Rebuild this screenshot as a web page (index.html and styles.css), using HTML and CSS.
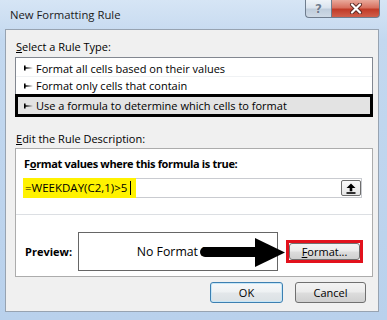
FILE: index.html
```html
<!DOCTYPE html>
<html lang="en">
<head>
    <meta charset="UTF-8">
    <title>New Formatting Rule</title>
    <link rel="stylesheet" href="styles.css">
</head>
<body>
    <div class="window">
        <div class="titlebar">
            <span class="title">New Formatting Rule</span>
            <div class="caption">
                <span class="cap-btn help">?</span>
                <span class="cap-btn close">
                    <svg width="16" height="11" viewBox="0 0 16 11">
                        <path d="M4 1.5 L12 9.5 M12 1.5 L4 9.5" stroke="#5b2a25" stroke-width="4" stroke-linecap="round"/>
                        <path d="M4 1.5 L12 9.5 M12 1.5 L4 9.5" stroke="#fff" stroke-width="2.2" stroke-linecap="round"/>
                    </svg>
                </span>
            </div>
        </div>

        <div class="panel">
            <div class="label"><u>S</u>elect a Rule Type:</div>
            <ul class="rule-list">
                <li class="rule first"><svg class="bullet" width="9" height="6" viewBox="0 0 9 6"><path d="M0 0.5 H1.6 V2.2 L9 3 L1.6 3.8 V5.5 H0 Z" fill="#000"/></svg>Format all cells based on their values</li>
                <li class="rule"><svg class="bullet" width="9" height="6" viewBox="0 0 9 6"><path d="M0 0.5 H1.6 V2.2 L9 3 L1.6 3.8 V5.5 H0 Z" fill="#000"/></svg>Format only cells that contain</li>
                <li class="rule selected"><svg class="bullet" width="9" height="6" viewBox="0 0 9 6"><path d="M0 0.5 H1.6 V2.2 L9 3 L1.6 3.8 V5.5 H0 Z" fill="#000"/></svg>Use a formula to determine which cells to format</li>
            </ul>

            <div class="label label-desc"><u>E</u>dit the Rule Description:</div>
            <div class="desc">
                <div class="desc-title">F<u>o</u>rmat values where this formula is true:</div>
                <div class="formula">
                    <span class="formula-text">=WEEKDAY(C2,1)&gt;5<span class="caret"></span></span>
                    <span class="collapse-btn">
                        <svg width="12" height="11" viewBox="0 0 12 11">
                            <path d="M6 0.5 L10.5 5 H7.3 V8.2 H4.7 V5 H1.5 Z" fill="#000"/>
                            <rect x="1.5" y="9.2" width="9" height="1.6" fill="#000"/>
                        </svg>
                    </span>
                </div>
                <div class="preview-row">
                    <span class="preview-label">Preview:</span>
                    <div class="preview-box">No Format Set</div>
                    <div class="format-wrap">
                        <button class="btn"><u>F</u>ormat...</button>
                    </div>
                    <svg class="arrow" width="88" height="34" viewBox="0 0 88 34">
                        <path d="M7 11 H59 V21 H7 A5 5 0 0 1 7 11 Z" fill="#000"/>
                        <path d="M57 2 L87 16.5 L57 31 Z" fill="#000"/>
                    </svg>
                </div>
            </div>

            <div class="actions">
                <button class="btn btn-ok">OK</button>
                <button class="btn btn-cancel">Cancel</button>
            </div>
        </div>
    </div>
</body>
</html>
```

FILE: styles.css
```css
* {
    margin: 0;
    padding: 0;
    box-sizing: border-box;
}

body {
    background-color: #bfd5ee;
    font-family: 'Open Sans', sans-serif;
    font-size: 11px;
    color: #000;
}

u {
    text-decoration: underline;
    text-underline-offset: 1px;
}

.window {
    width: 387px;
    height: 320px;
    padding: 0 8px 8px 5px;
    background: linear-gradient(180deg, #d6e5f5 0, #c3d8ef 40px, #b9d1ec 100%);
    display: flex;
    flex-direction: column;
    overflow: hidden;
}

/* Заголовок окна */
.titlebar {
    height: 29px;
    flex: none;
    display: flex;
    align-items: flex-start;
}

.title {
    font-size: 11.3px;
    line-height: 29px;
    padding-left: 5px;
    color: #1b1b1b;
}

.caption {
    margin-left: auto;
    margin-right: -1px;
    display: flex;
}

.cap-btn {
    height: 18px;
    display: flex;
    align-items: center;
    justify-content: center;
    border: 1px solid #6f7d8e;
    border-top: none;
}

.help {
    width: 26px;
    border-right: none;
    border-radius: 0 0 0 4px;
    background: linear-gradient(180deg, #eef3f8 0, #dbe4ee 45%, #bfcddc 55%, #cfdae6 100%);
    font-family: 'DejaVu Sans', sans-serif;
    font-size: 12px;
    font-weight: bold;
    color: #6e7c8e;
    text-shadow: 0 0 1px #fff;
}

.close {
    width: 49px;
    border-radius: 0 0 4px 0;
    background: linear-gradient(180deg, #e9a99c 0, #d8705f 45%, #c13b28 55%, #d0604c 100%);
}

/* Основная панель */
.panel {
    flex: 1;
    border: 1px solid #97a3b1;
    background-color: #f0f0f0;
    padding: 0 5px 0 9px;
}

.label {
    line-height: 16px;
    margin-top: 9px;
    margin-bottom: 2px;
    padding-left: 1px;
}

.label-desc {
    margin-top: 14px;
    margin-bottom: 1px;
}

.rule-list {
    list-style: none;
    background: white;
    border: 1px solid #828790;
    padding-top: 2px;
}

.rule {
    height: 17px;
    line-height: 17px;
    padding-left: 8px;
    display: flex;
    align-items: center;
    white-space: nowrap;
}

.rule.first {
    border-bottom: 1px solid #f0f2f4;
}

.bullet {
    flex: none;
    margin-right: 3px;
}

.rule.selected {
    height: 23px;
    margin: 0 -1px -1px -1px;
    border: 3px solid #000;
    background-color: #e3e3e3;
    padding-left: 6px;
}

/* Описание правила */
.desc {
    background: white;
    border: 1px solid #acacac;
    height: 129px;
    padding-top: 7px;
}

.desc-title {
    font-weight: bold;
    line-height: 16px;
    margin-left: 8px;
    margin-bottom: 6px;
    letter-spacing: -0.35px;
}

.formula {
    height: 20px;
    margin: 0 10px 0 7px;
    border: 1px solid #c9cbd0;
    display: flex;
    align-items: center;
}

.formula-text {
    align-self: stretch;
    margin: -1px 0 -1px -1px;
    width: 113px;
    background-color: #fff200;
    padding-left: 2px;
    font-size: 11.5px;
    line-height: 20px;
    display: flex;
    align-items: center;
}

.caret {
    display: inline-block;
    width: 1px;
    height: 14px;
    background: #000;
    margin-left: 3px;
}

.collapse-btn {
    margin-left: auto;
    margin-right: 0;
    width: 20px;
    height: 16px;
    border: 1px solid #6d6d6d;
    border-radius: 2px;
    background: linear-gradient(180deg, #fbfbfb, #e6e6e6);
    display: flex;
    align-items: center;
    justify-content: center;
}

.preview-row {
    position: relative;
    margin-top: 16px;
    border-top: 1px solid #dcdfe3;
    padding: 17px 0 0 9px;
    display: flex;
    align-items: center;
}

.preview-label {
    width: 53px;
    font-weight: bold;
    flex: none;
}

.preview-box {
    width: 200px;
    height: 39px;
    border: 1px solid #666;
    font-size: 12.3px;
    display: flex;
    align-items: center;
    justify-content: center;
    flex: none;
}

.format-wrap {
    width: 77px;
    height: 23px;
    margin-left: 8px;
    border: 3px solid #e2111c;
    display: flex;
}

.format-wrap .btn {
    width: 100%;
    height: 100%;
}

.arrow {
    position: absolute;
    left: 182px;
    top: 21px;
}

/* Кнопки */
.btn {
    font-family: 'Open Sans', sans-serif;
    font-size: 11px;
    color: #000;
    border: 1px solid #707070;
    border-radius: 3px;
    background: linear-gradient(180deg, #f3f3f3 0, #ebebeb 48%, #dddddd 52%, #cfcfcf 100%);
}

.actions {
    display: flex;
    justify-content: flex-end;
    gap: 12px;
    margin-top: 5px;
    padding-right: 7px;
}

.btn-ok {
    width: 73px;
    height: 21px;
    border-color: #3c7fb1;
    box-shadow: inset 0 0 0 1px #c6e6f7;
    background: linear-gradient(180deg, #f6f8fa 0, #eef1f3 48%, #e3e7ea 52%, #dbe1e5 100%);
}

.btn-cancel {
    width: 71px;
    height: 21px;
}
```
